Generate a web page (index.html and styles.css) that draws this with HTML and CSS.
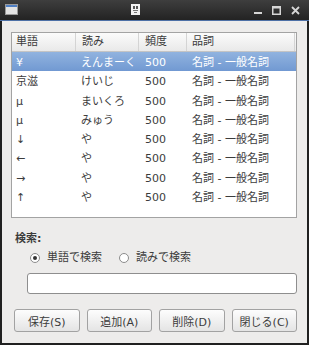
FILE: index.html
```html
<!DOCTYPE html>
<html lang="ja">
<head>
  <meta charset="UTF-8">
  <title>辞書</title>
  <link rel="stylesheet" href="styles.css">
</head>
<body>
  <div class="window">
    <!-- Title bar -->
    <div class="titlebar">
      <svg class="win-icon" width="13" height="11" viewBox="0 0 13 11">
        <rect x="0.5" y="0.5" width="12" height="10" fill="#e4e4e4" stroke="#9a9a9a"/>
        <rect x="1" y="1" width="11" height="2" fill="#4f7fc4"/>
      </svg>
      <svg class="title-glyph" width="9" height="11" viewBox="0 0 9 11">
        <rect x="0" y="0" width="9" height="11" fill="#f2f2f2"/>
        <rect x="2" y="2" width="2" height="3" fill="#555"/>
        <rect x="5" y="2" width="2" height="3" fill="#555"/>
        <rect x="2" y="6" width="5" height="1" fill="#777"/>
        <rect x="3" y="8" width="3" height="1" fill="#777"/>
      </svg>
      <div class="controls">
        <svg width="8" height="9" viewBox="0 0 8 9"><rect x="0" y="6" width="8" height="2" fill="#d6d6d6"/></svg>
        <svg width="9" height="9" viewBox="0 0 9 9"><rect x="0.75" y="0.75" width="7.5" height="7.5" fill="none" stroke="#d6d6d6" stroke-width="1.5"/><rect x="0" y="0" width="9" height="2.5" fill="#d6d6d6"/></svg>
        <svg width="9" height="9" viewBox="0 0 9 9"><path d="M1 1 L8 8 M8 1 L1 8" stroke="#d6d6d6" stroke-width="1.8"/></svg>
      </div>
    </div>

    <div class="content">
      <!-- Word list -->
      <div class="table-box">
        <div class="row head">
          <div class="c1">単語</div>
          <div class="c2">読み</div>
          <div class="c3">頻度</div>
          <div class="c4">品詞</div>
        </div>
        <div id="rows"></div>
      </div>

      <!-- Search -->
      <div class="search-label">検索:</div>
      <div class="radios">
        <label class="radio"><span class="dot checked"></span>単語で検索</label>
        <label class="radio"><span class="dot"></span>読みで検索</label>
      </div>
      <input class="search-input" type="text">

      <div class="buttons">
        <button>保存(S)</button>
        <button>追加(A)</button>
        <button>削除(D)</button>
        <button>閉じる(C)</button>
      </div>
    </div>
  </div>

  <script>
    const words = [
      ['¥', 'えんまーく'],
      ['京滋', 'けいじ'],
      ['µ', 'まいくろ'],
      ['µ', 'みゅう'],
      ['↓', 'や'],
      ['←', 'や'],
      ['→', 'や'],
      ['↑', 'や']
    ];

    const rows = document.getElementById('rows');
    words.forEach((w, i) => {
      const div = document.createElement('div');
      div.className = 'row' + (i === 0 ? ' selected' : '');
      div.innerHTML = `
        <div class="c1">${w[0]}</div>
        <div class="c2">${w[1]}</div>
        <div class="c3">500</div>
        <div class="c4">名詞 - 一般名詞</div>
      `;
      rows.appendChild(div);
    });
  </script>
</body>
</html>
```

FILE: styles.css
```css
body {
  margin: 0;
  font-family: "DejaVu Sans", "Noto Sans CJK JP", sans-serif;
  font-size: 11px;
  color: #3c3c3c;
}

.window {
  width: 309px;
  height: 345px;
  box-sizing: border-box;
  background: #edeceb;
  border: 2px solid #202020;
  border-top: none;
}

/* Title bar */
.titlebar {
  height: 20px;
  margin: 0 -2px;
  background: linear-gradient(#3e3e3e, #232323);
  border-bottom: 1px solid #4d70a6;
  display: flex;
  align-items: center;
  position: relative;
}

.win-icon {
  margin-left: 5px;
  margin-top: -1px;
}

.title-glyph {
  position: absolute;
  left: 131px;
  top: 4px;
}

.controls {
  margin-left: auto;
  margin-right: 9px;
  display: flex;
  align-items: center;
  gap: 10px;
  margin-top: 1px;
}

.content {
  padding: 11px 10px 0 9px;
}

/* Table */
.table-box {
  height: 184px;
  background: #fff;
  border: 1px solid #a3a3a3;
}

.row {
  display: flex;
  height: 19.3px;
  line-height: 21px;
  white-space: nowrap;
}

.row.head {
  height: 18px;
  line-height: 18px;
  background: linear-gradient(#fbfbfb, #e9e9e9);
  border-bottom: 1px solid #c4c4c4;
}

.row.head > div {
  border-right: 1px solid #d4d4d4;
}

.row.head .c4 {
  margin-right: 1px;
}

.row.selected {
  background: linear-gradient(#91b3df, #7199d2);
  color: #fff;
}

.c1 { width: 64px; padding-left: 4px; box-sizing: border-box; }
.c2 { width: 63px; padding-left: 5px; box-sizing: border-box; }
.c3 { width: 48px; padding-left: 6px; box-sizing: border-box; }
.c4 { flex: 1; padding-left: 5px; }

.row.head .c2 { padding-left: 6px; }

/* Search */
.search-label {
  margin-top: 14px;
  margin-left: 4px;
  font-weight: bold;
  line-height: 14px;
}

.radios {
  display: flex;
  margin-top: 5px;
  margin-left: 19px;
  height: 14px;
  line-height: 14px;
}

.radio {
  display: flex;
  align-items: center;
  margin-right: 17px;
}

.dot {
  width: 10px;
  height: 10px;
  box-sizing: border-box;
  border: 1px solid #8c8c8c;
  border-radius: 50%;
  background: #fff;
  margin-right: 7px;
  position: relative;
}

.dot.checked::after {
  content: "";
  position: absolute;
  left: 2px;
  top: 2px;
  width: 4px;
  height: 4px;
  border-radius: 50%;
  background: #333;
}

.search-input {
  display: block;
  margin: 8px 0 0 16px;
  width: 270px;
  height: 21px;
  box-sizing: border-box;
  border: 1px solid #8e8e8e;
  border-radius: 3px;
  background: #fff;
  padding: 0 4px;
  font: inherit;
}

/* Buttons */
.buttons {
  display: flex;
  gap: 7px;
  margin: 15px 0 0 3px;
}

.buttons button {
  width: 66px;
  height: 23px;
  padding: 0;
  border: 1px solid #a2a2a2;
  border-radius: 3px;
  background: linear-gradient(#fdfdfd, #e4e4e4);
  color: #3c3c3c;
  font: inherit;
}
```
